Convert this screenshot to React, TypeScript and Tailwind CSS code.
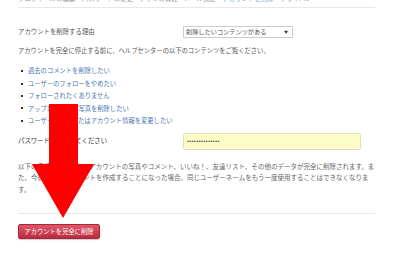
import React from "react";

const links = [
  "過去のコメントを削除したい",
  "ユーザーのフォローをやめたい",
  "フォローされたくありません",
  "アップロードした写真を削除したい",
  "ユーザーネームまたはアカウント情報を変更したい",
];

export default function App() {
  return (
    <div
      className="relative h-[253px] w-[400px] overflow-hidden bg-white text-[#555]"
      style={{ fontFamily: '"Noto Sans CJK JP", "Noto Sans", sans-serif' }}
    >
      <div className="ml-[18px] w-[357px]">
        <div className="h-[8px] overflow-hidden border-b border-[#e8e8e8]">
          <p className="-mt-[6px] whitespace-nowrap text-[6.4px] leading-[9px] text-[#999]">
            プロフィールの編集　パスワードの変更　アプリの管理　メール設定　<span className="text-[#7aa3c8]">アカウントを削除</span>　プライバシー
          </p>
        </div>

        <div className="mt-[18px] flex h-[12px] items-center">
          <span className="w-[165px] text-[6.4px] leading-[10px]">アカウントを削除する理由</span>
          <div className="flex h-[12px] w-[110px] items-center justify-between border border-[#ccc] bg-white px-[2px] text-[6.2px] leading-[10px]">
            <span>削除したいコンテンツがある</span>
            <span className="mr-[2px] text-[4px] text-[#333]">▼</span>
          </div>
        </div>

        <p className="mt-[8px] whitespace-nowrap text-[6.3px] leading-[10px]">
          アカウントを完全に停止する前に、ヘルプセンターの以下のコンテンツをご覧ください。
        </p>

        <ul className="mt-[9px]">
          {links.map((l) => (
            <li key={l} className="flex h-[12.4px] items-center text-[6.3px] text-[#4a78b0]">
              <span className="ml-[3px] mr-[5px] h-[2px] w-[2px] bg-[#333]" />
              {l}
            </li>
          ))}
        </ul>

        <div className="mt-[6px] flex h-[17px] items-center">
          <span className="w-[165px] text-[6.4px] leading-[10px] text-[#333]">パスワードを入力してください</span>
          <div
            className="flex h-[17px] w-[178px] items-center rounded-[2px] border border-[#e0e0c0] bg-[#fdfdc8] px-[3px] text-[5px] leading-[8px] tracking-[0.6px] text-[#333]"
            style={{ fontFamily: '"Liberation Sans", sans-serif' }}
          >
            ••••••••••••••
          </div>
        </div>

        <p className="mt-[11px] text-[6.5px] leading-[11.5px] text-[#666]">
          <span className="block whitespace-nowrap">以下の手続きを行うと、アカウントの写真やコメント、いいね！、友達リスト、その他のデータが完全に削除されます。ま</span>
          <span className="block whitespace-nowrap">た、今後新たにアカウントを作成することになった場合、同じユーザーネームをもう一度使用することはできなくなりま</span>
          <span className="block whitespace-nowrap">す。</span>
        </p>

        <div className="mt-[18px] border-t border-[#e8e8e8]" />

        <button
          type="button"
          className="mt-[10px] flex h-[15px] w-[82px] items-center justify-center rounded-[2px] border border-[#a8283a] bg-gradient-to-b from-[#e0566a] to-[#bb2a40] text-[6.3px] leading-[8px] text-white shadow-[0_1px_1px_rgba(0,0,0,0.2)]"
        >
          アカウントを完全に削除
        </button>
      </div>

      <svg className="absolute left-0 top-0" width="400" height="253" viewBox="0 0 400 253">
        <polygon points="49,104 78,104 78,164 94,164 63,218 32,164 49,164" fill="#ff0000" />
      </svg>
    </div>
  );
}
